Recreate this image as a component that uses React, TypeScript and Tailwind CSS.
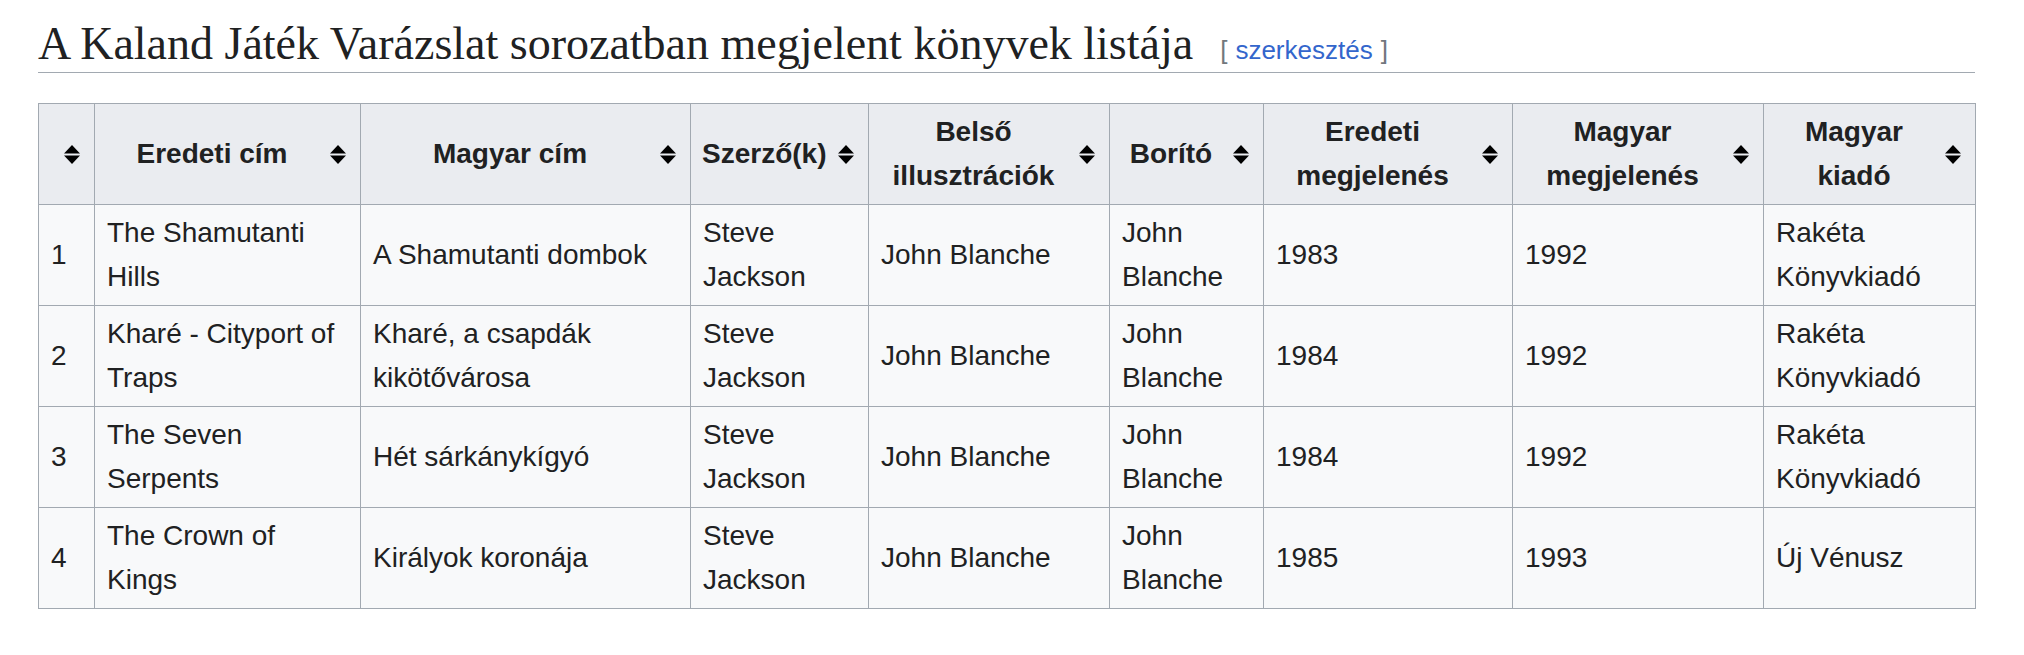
import React from "react";

const headers = [
  "",
  "Eredeti cím",
  "Magyar cím",
  "Szerző(k)",
  "Belső illusztrációk",
  "Borító",
  "Eredeti megjelenés",
  "Magyar megjelenés",
  "Magyar kiadó",
];

const colWidths = ["w-[56px]", "w-[266px]", "w-[330px]", "w-[178px]", "w-[241px]", "w-[154px]", "w-[249px]", "w-[251px]", "w-[212px]"];

const rows = [
  ["1", "The Shamutanti Hills", "A Shamutanti dombok", "Steve Jackson", "John Blanche", "John Blanche", "1983", "1992", "Rakéta Könyvkiadó"],
  ["2", "Kharé - Cityport of Traps", "Kharé, a csapdák kikötővárosa", "Steve Jackson", "John Blanche", "John Blanche", "1984", "1992", "Rakéta Könyvkiadó"],
  ["3", "The Seven Serpents", "Hét sárkánykígyó", "Steve Jackson", "John Blanche", "John Blanche", "1984", "1992", "Rakéta Könyvkiadó"],
  ["4", "The Crown of Kings", "Királyok koronája", "Steve Jackson", "John Blanche", "John Blanche", "1985", "1993", "Új Vénusz"],
];

function SortIcon() {
  return (
    <svg width="16" height="19" viewBox="0 0 16 19" className="flex-shrink-0">
      <polygon points="8,0 16,8.5 0,8.5" fill="#000" />
      <polygon points="0,10.5 16,10.5 8,19" fill="#000" />
    </svg>
  );
}

export default function App() {
  return (
    <div className="min-h-[655px] bg-white pl-[38px] font-['Liberation_Sans',Arial,sans-serif] text-[#202122]">
      <div className="w-[1937px]">
        {/* címsor */}
        <h2 className="mt-[18px] flex items-baseline border-b border-[#a2a9b1] pb-[2px]">
          <span className="font-['Liberation_Serif','Times_New_Roman',serif] text-[46px] leading-[52px] font-normal">
            A Kaland Játék Varázslat sorozatban megjelent könyvek listája
          </span>
          <span className="ml-[27px] text-[26px] leading-[30px] text-[#72777d]">
            [<span className="px-[8px] text-[#3366cc]">szerkesztés</span>]
          </span>
        </h2>

        <table className="mt-[30px] w-[1937px] table-fixed border-collapse border border-[#a2a9b1] text-[28px] leading-[44px]">
          <colgroup>
            {colWidths.map((w, i) => (
              <col key={i} className={w} />
            ))}
          </colgroup>
          <thead>
            <tr className="bg-[#eaecf0]">
              {headers.map((h, i) => (
                <th key={i} className="border border-[#a2a9b1] py-[6px] pl-[11px] pr-[14px] font-bold">
                  <div className="flex items-center">
                    <span className="mr-[12px] flex-1 text-center">{h}</span>
                    <SortIcon />
                  </div>
                </th>
              ))}
            </tr>
          </thead>
          <tbody>
            {rows.map((r, ri) => (
              <tr key={ri} className="bg-[#f8f9fa]">
                {r.map((c, ci) => (
                  <td key={ci} className="border border-[#a2a9b1] px-[12px] py-[6px] align-middle">
                    {c}
                  </td>
                ))}
              </tr>
            ))}
          </tbody>
        </table>
      </div>
    </div>
  );
}
